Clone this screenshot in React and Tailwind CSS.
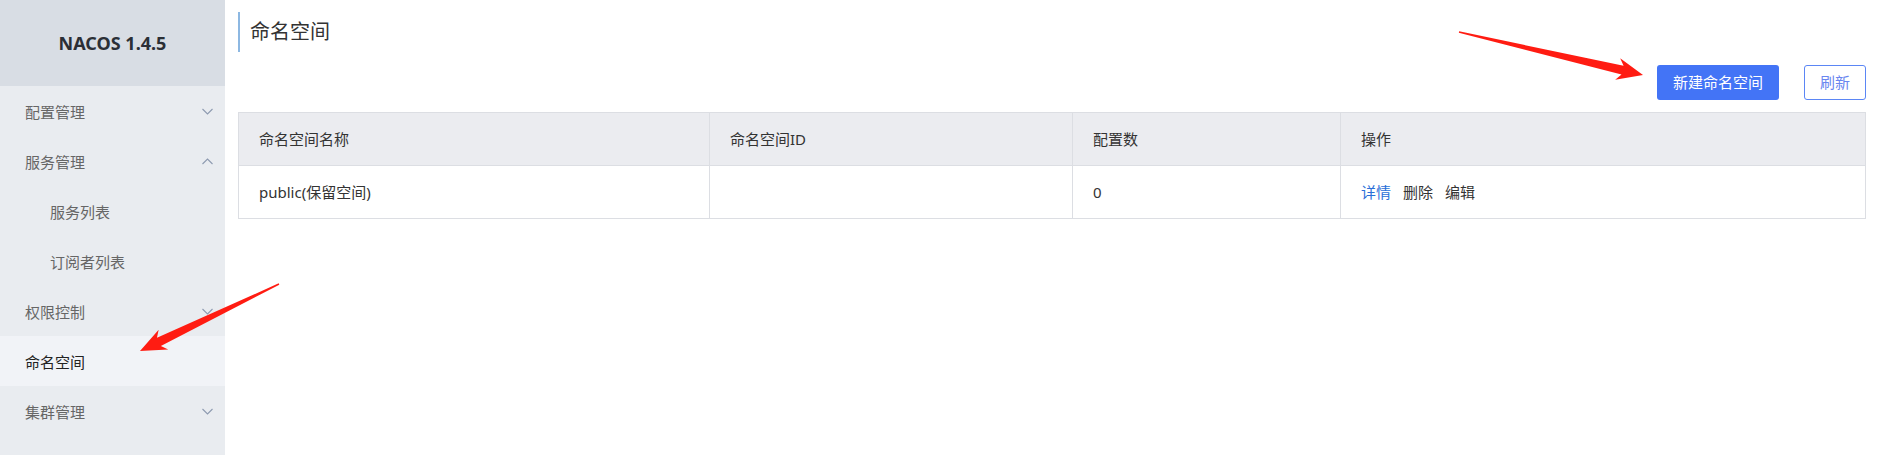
import React from "react"

const menu = [
  { label: "配置管理", arrow: "down" },
  { label: "服务管理", arrow: "up" },
  { label: "服务列表", sub: true },
  { label: "订阅者列表", sub: true },
  { label: "权限控制", arrow: "down" },
  { label: "命名空间", active: true },
  { label: "集群管理", arrow: "down" },
]

function Chevron({ dir }) {
  return (
    <svg width="11" height="7" viewBox="0 0 11 7" className="shrink-0">
      <polyline
        points={dir === "up" ? "0.5,6 5.5,1 10.5,6" : "0.5,1 5.5,6 10.5,1"}
        fill="none"
        stroke="#8d9ab0"
        strokeWidth="1.1"
      />
    </svg>
  )
}

// tapered annotation arrow, tail -> tip
function arrowPoints(tx, ty, px, py, headLen, headHalf, shaftHalf) {
  const len = Math.hypot(px - tx, py - ty)
  const dx = (px - tx) / len
  const dy = (py - ty) / len
  const nx = -dy
  const ny = dx
  const neckX = px - dx * headLen
  const neckY = py - dy * headLen
  const barbX = px - dx * (headLen + 5)
  const barbY = py - dy * (headLen + 5)
  const pts = [
    [tx + nx * 0.7, ty + ny * 0.7],
    [neckX + nx * shaftHalf, neckY + ny * shaftHalf],
    [barbX + nx * headHalf, barbY + ny * headHalf],
    [px, py],
    [barbX - nx * headHalf, barbY - ny * headHalf],
    [neckX - nx * shaftHalf, neckY - ny * shaftHalf],
    [tx - nx * 0.7, ty - ny * 0.7],
  ]
  return pts.map((p) => p.join(",")).join(" ")
}

export default function App() {
  return (
    <div className="relative flex min-h-screen bg-white font-['Noto_Sans','Noto_Sans_CJK_SC',sans-serif] text-[#333]">
      {/* sidebar */}
      <aside className="w-[225px] shrink-0 bg-[#e9ecf0]">
        <div className="flex h-[86px] items-center justify-center bg-[#d8dde4] text-[18px] font-bold text-[#2b2f36]">
          NACOS 1.4.5
        </div>
        <nav>
          {menu.map((m) => (
            <div
              key={m.label}
              className={
                "flex h-[50px] items-center justify-between pr-[12px] text-[15px] " +
                (m.sub ? "pl-[50px] " : "pl-[25px] ") +
                (m.active ? "bg-[#f1f3f7] text-[#222]" : "text-[#666]")
              }
            >
              <span className="pt-[3px]">{m.label}</span>
              {m.arrow && <Chevron dir={m.arrow} />}
            </div>
          ))}
        </nav>
      </aside>

      {/* main */}
      <main className="flex-1 pl-[13px] pr-[11px] pt-[12px]">
        <div className="flex h-[40px] items-center border-l-2 border-[#8db8e2] pl-[10px] text-[20px] text-[#333]">
          命名空间
        </div>

        <div className="mt-[13px] flex justify-end gap-[25px]">
          <button className="h-[35px] rounded-[3px] bg-[#4374f6] px-[16px] text-[15px] text-white">
            新建命名空间
          </button>
          <button className="h-[35px] rounded-[3px] border border-[#5b86f5] bg-white px-[15px] text-[15px] text-[#6a86f0]">
            刷新
          </button>
        </div>

        <div className="mt-[12px] border border-[#dcdee3] text-[15px]">
          <div className="grid h-[52px] grid-cols-[470px_363px_268px_1fr] bg-[#ebecf0]">
            <div className="flex items-center px-[20px]">命名空间名称</div>
            <div className="flex items-center border-l border-[#dcdee3] px-[20px]">命名空间ID</div>
            <div className="flex items-center border-l border-[#dcdee3] px-[20px]">配置数</div>
            <div className="flex items-center border-l border-[#dcdee3] px-[20px]">操作</div>
          </div>
          <div className="grid h-[53px] grid-cols-[470px_363px_268px_1fr] border-t border-[#dcdee3]">
            <div className="flex items-center px-[20px]">public(保留空间)</div>
            <div className="flex items-center border-l border-[#dcdee3] px-[20px]"></div>
            <div className="flex items-center border-l border-[#dcdee3] px-[20px]">0</div>
            <div className="flex items-center gap-[12px] border-l border-[#dcdee3] px-[20px]">
              <a className="text-[#2a6fd8]">详情</a>
              <a>删除</a>
              <a>编辑</a>
            </div>
          </div>
        </div>
      </main>

      {/* red annotation arrows */}
      <svg className="pointer-events-none absolute left-0 top-0" width="1877" height="455">
        <polygon points={arrowPoints(1459, 32, 1643, 75, 21, 11, 4.5)} fill="#ff1c12" />
        <polygon points={arrowPoints(279, 284, 140, 351, 21, 11, 4.5)} fill="#ff1c12" />
      </svg>
    </div>
  )
}
